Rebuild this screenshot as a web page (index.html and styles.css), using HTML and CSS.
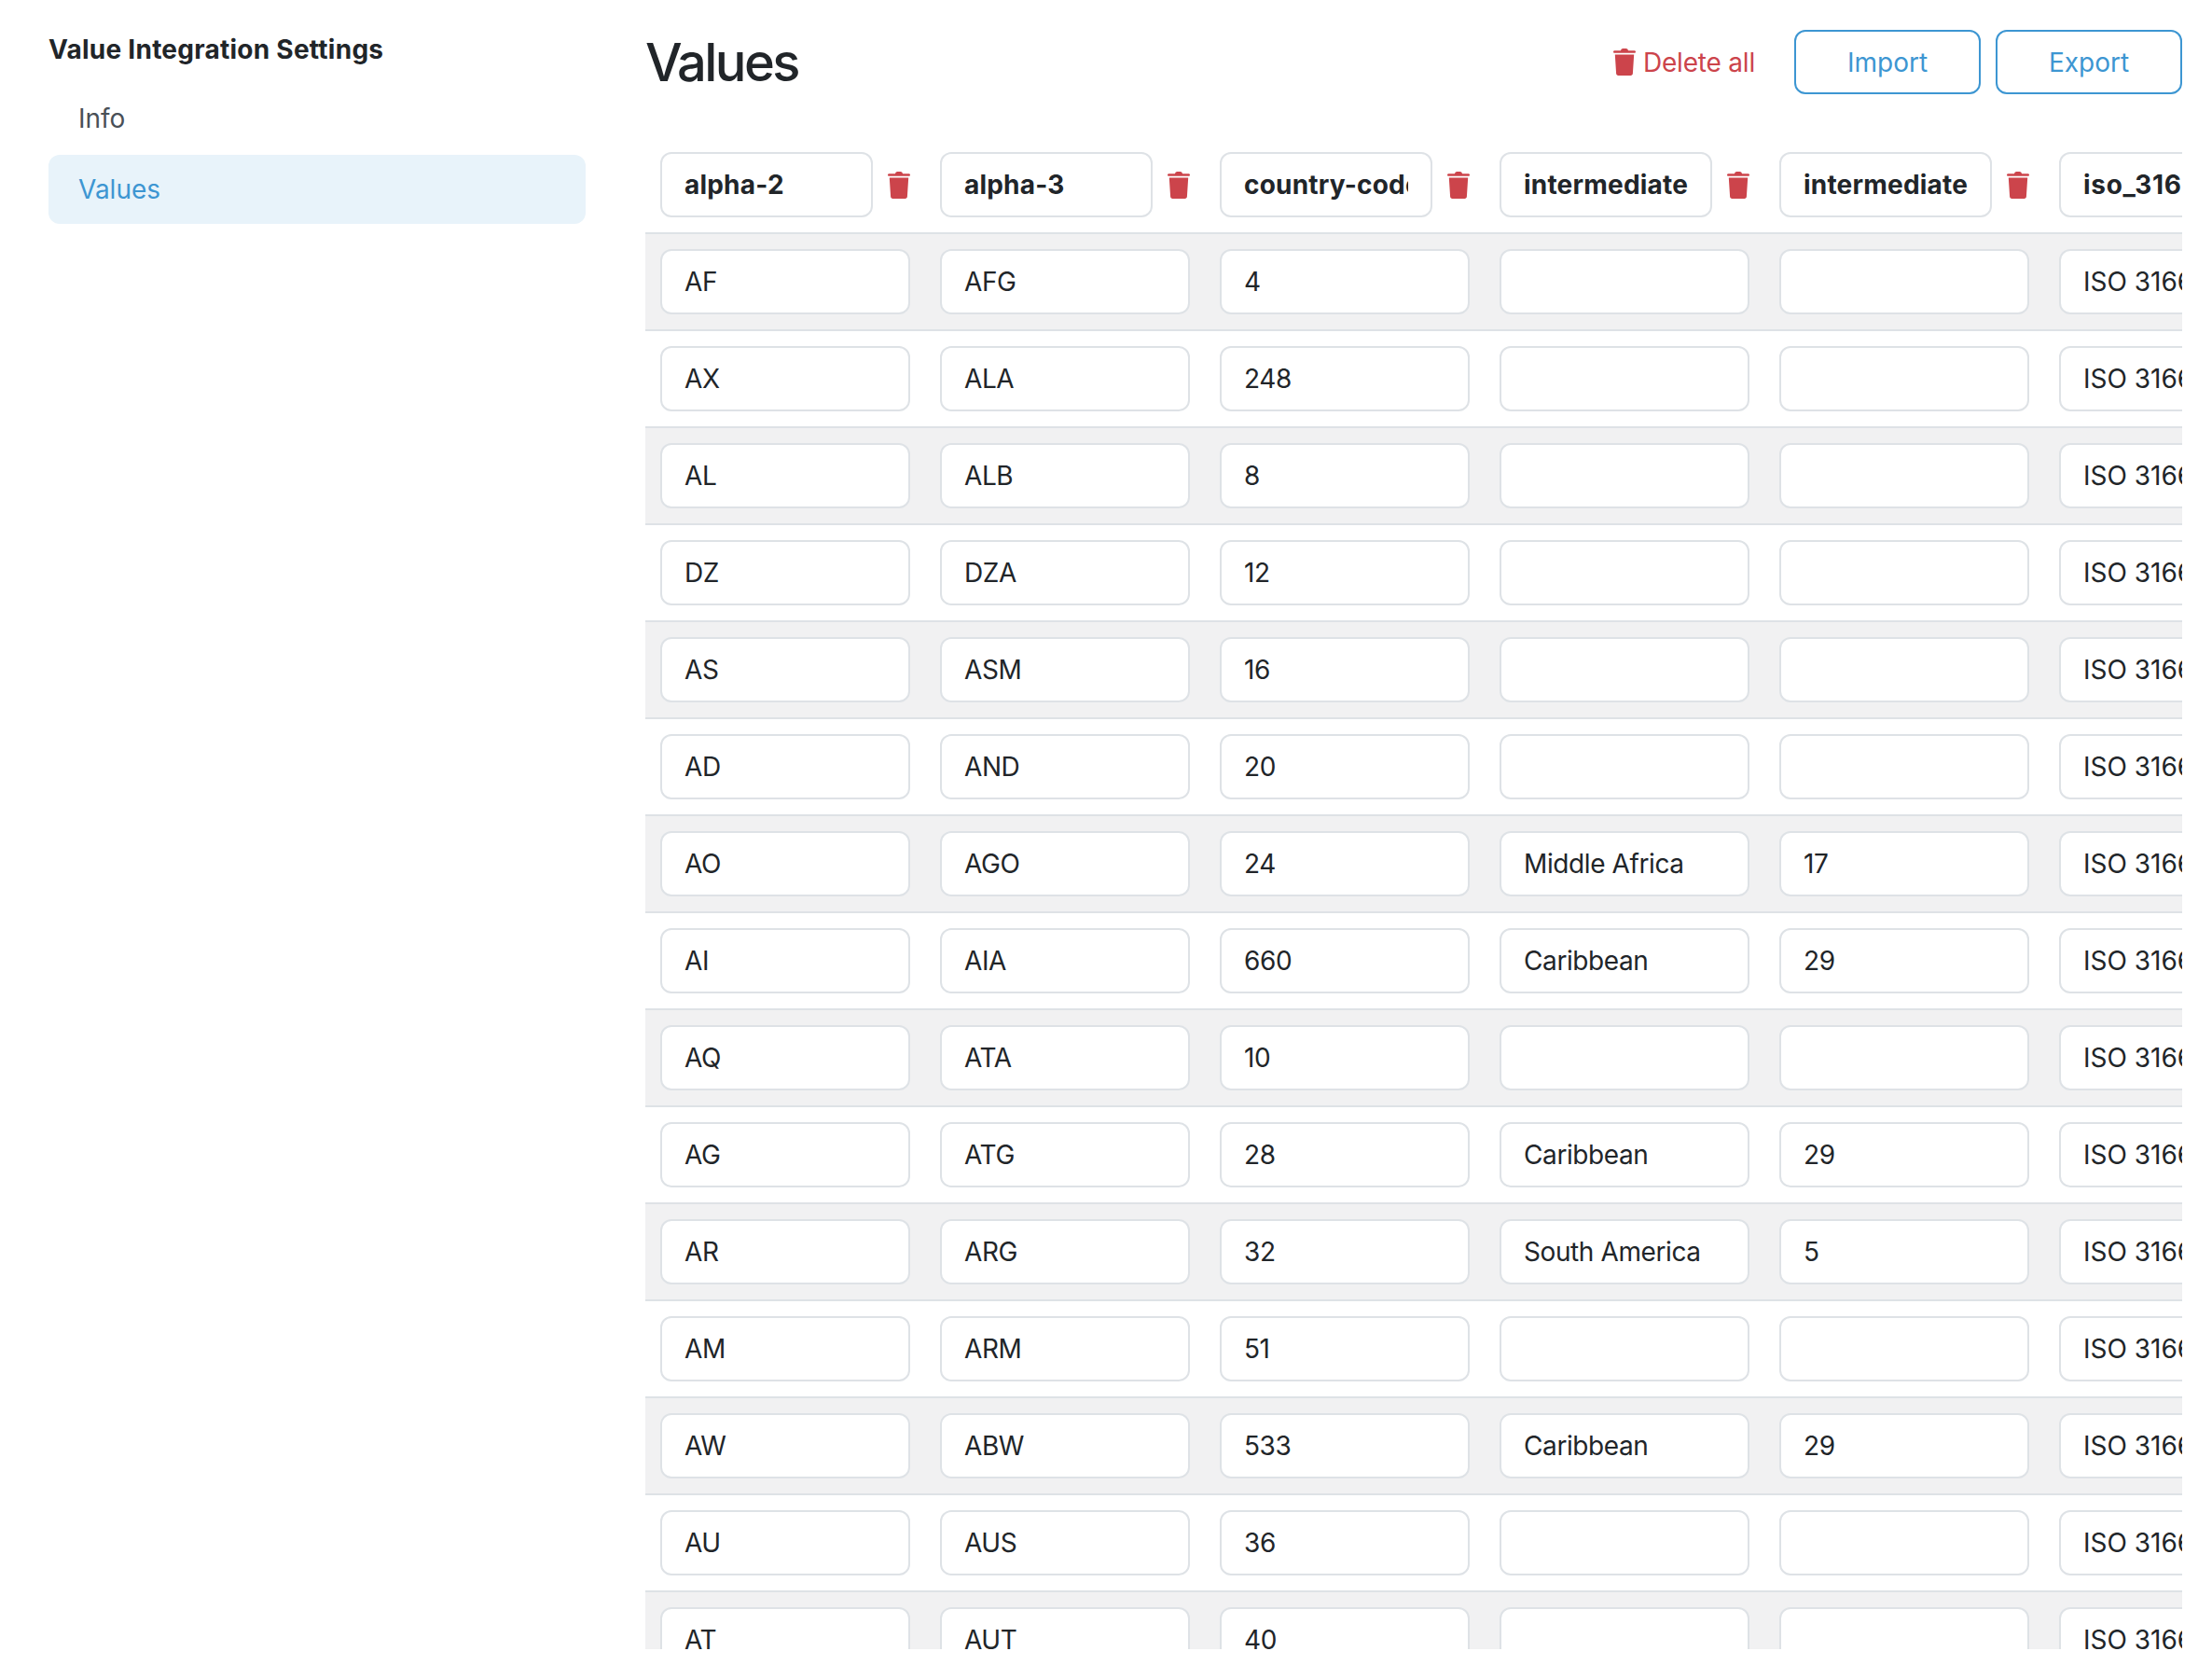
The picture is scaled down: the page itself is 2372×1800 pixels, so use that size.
FILE: index.html
```html
<!DOCTYPE html>
<html lang="en">
<head>
  <meta charset="UTF-8">
  <title>Values</title>
  <link rel="stylesheet" href="styles.css">
</head>
<body>
<svg class="icon-defs" width="0" height="0">
  <symbol id="trash" viewBox="0 0 24 29">
    <path d="M8 2.2C8.3.8 9.2 0 10.4 0h3.2c1.2 0 2.1.8 2.4 2.2h6.6c.8 0 1.4.6 1.4 1.3s-.6 1.3-1.4 1.3H1.400C.6 4.800 0 4.200 0 3.500s.6-1.300 1.400-1.300zM1.800 6.400h20.400l-1.300 20.400c-.1 1.300-1 2.200-2.300 2.200H5.400c-1.300 0-2.200-.9-2.300-2.200z"/>
  </symbol>
</svg>

<div class="page">
  <aside class="sidebar">
    <h2 class="sidebar-title">Value Integration Settings</h2>
    <a class="nav-item">Info</a>
    <a class="nav-item active">Values</a>
  </aside>

  <main class="content">
    <div class="content-header">
      <h1>Values</h1>
      <a class="delete-all"><svg class="trash"><use href="#trash"/></svg>Delete all</a>
      <button class="btn">Import</button>
      <button class="btn">Export</button>
    </div>

    <div class="table-wrap">
      <table>
        <thead>
          <tr>
            <th><div class="head-cell"><input value="alpha-2"><svg class="trash"><use href="#trash"/></svg></div></th>
            <th><div class="head-cell"><input value="alpha-3"><svg class="trash"><use href="#trash"/></svg></div></th>
            <th><div class="head-cell"><input value="country-code"><svg class="trash"><use href="#trash"/></svg></div></th>
            <th><div class="head-cell"><input value="intermediate-region"><svg class="trash"><use href="#trash"/></svg></div></th>
            <th><div class="head-cell"><input value="intermediate-region-code"><svg class="trash"><use href="#trash"/></svg></div></th>
            <th><div class="head-cell"><input value="iso_3166-2"><svg class="trash"><use href="#trash"/></svg></div></th>
          </tr>
        </thead>
        <tbody>
          <tr><td><input value="AF"></td><td><input value="AFG"></td><td><input value="4"></td><td><input value=""></td><td><input value=""></td><td><input value="ISO 3166-2:AF"></td></tr>
          <tr><td><input value="AX"></td><td><input value="ALA"></td><td><input value="248"></td><td><input value=""></td><td><input value=""></td><td><input value="ISO 3166-2:AX"></td></tr>
          <tr><td><input value="AL"></td><td><input value="ALB"></td><td><input value="8"></td><td><input value=""></td><td><input value=""></td><td><input value="ISO 3166-2:AL"></td></tr>
          <tr><td><input value="DZ"></td><td><input value="DZA"></td><td><input value="12"></td><td><input value=""></td><td><input value=""></td><td><input value="ISO 3166-2:DZ"></td></tr>
          <tr><td><input value="AS"></td><td><input value="ASM"></td><td><input value="16"></td><td><input value=""></td><td><input value=""></td><td><input value="ISO 3166-2:AS"></td></tr>
          <tr><td><input value="AD"></td><td><input value="AND"></td><td><input value="20"></td><td><input value=""></td><td><input value=""></td><td><input value="ISO 3166-2:AD"></td></tr>
          <tr><td><input value="AO"></td><td><input value="AGO"></td><td><input value="24"></td><td><input value="Middle Africa"></td><td><input value="17"></td><td><input value="ISO 3166-2:AO"></td></tr>
          <tr><td><input value="AI"></td><td><input value="AIA"></td><td><input value="660"></td><td><input value="Caribbean"></td><td><input value="29"></td><td><input value="ISO 3166-2:AI"></td></tr>
          <tr><td><input value="AQ"></td><td><input value="ATA"></td><td><input value="10"></td><td><input value=""></td><td><input value=""></td><td><input value="ISO 3166-2:AQ"></td></tr>
          <tr><td><input value="AG"></td><td><input value="ATG"></td><td><input value="28"></td><td><input value="Caribbean"></td><td><input value="29"></td><td><input value="ISO 3166-2:AG"></td></tr>
          <tr><td><input value="AR"></td><td><input value="ARG"></td><td><input value="32"></td><td><input value="South America"></td><td><input value="5"></td><td><input value="ISO 3166-2:AR"></td></tr>
          <tr><td><input value="AM"></td><td><input value="ARM"></td><td><input value="51"></td><td><input value=""></td><td><input value=""></td><td><input value="ISO 3166-2:AM"></td></tr>
          <tr><td><input value="AW"></td><td><input value="ABW"></td><td><input value="533"></td><td><input value="Caribbean"></td><td><input value="29"></td><td><input value="ISO 3166-2:AW"></td></tr>
          <tr><td><input value="AU"></td><td><input value="AUS"></td><td><input value="36"></td><td><input value=""></td><td><input value=""></td><td><input value="ISO 3166-2:AU"></td></tr>
          <tr><td><input value="AT"></td><td><input value="AUT"></td><td><input value="40"></td><td><input value=""></td><td><input value=""></td><td><input value="ISO 3166-2:AT"></td></tr>
        </tbody>
      </table>
    </div>
  </main>
</div>
</body>
</html>
```

FILE: styles.css
```css
* {
  box-sizing: border-box;
}
body {
  margin: 0;
  background-color: #fff;
  color: #212529;
  font-family: Inter, "Liberation Sans", sans-serif;
  font-size: 28px;
  line-height: 42px;
}
.icon-defs {
  display: block;
  height: 0;
}
.page {
  display: flex;
  height: 1800px;
  padding: 32px 32px 32px 52px;
  overflow: hidden;
}

/* sidebar */
.sidebar {
  flex: none;
  width: 576px;
  margin-right: 64px;
}
.sidebar-title {
  margin: 0 0 16px;
  font-size: 28px;
  line-height: 42px;
  font-weight: 700;
  letter-spacing: 0.25px;
}
.nav-item {
  display: block;
  padding: 16px 32px;
  margin-bottom: 2px;
  border-radius: 12px;
  color: #495057;
}
.nav-item.active {
  background-color: #e8f3fa;
  color: #3d96d2;
}

/* main area */
.content {
  flex: 1;
  min-width: 0;
  display: flex;
  flex-direction: column;
}
.content-header {
  flex: none;
  display: flex;
  align-items: center;
  height: 69px;
  margin-bottom: 46px;
}
h1 {
  flex: 1;
  margin: 0;
  padding-top: 2px;
  font-size: 56px;
  line-height: 69px;
  font-weight: 500;
  letter-spacing: -2.6px;
}
.delete-all {
  display: flex;
  align-items: center;
  gap: 8px;
  margin-right: 42px;
  color: #cc444b;
  letter-spacing: -0.2px;
}
.btn {
  width: 200px;
  height: 69px;
  margin-left: 16px;
  border: 2px solid #3d96d2;
  border-radius: 12px;
  background-color: #fff;
  color: #3d96d2;
  font: inherit;
}
.delete-all + .btn {
  margin-left: 0;
}
.trash {
  flex: none;
  width: 24px;
  height: 29px;
  fill: #cc444b;
}

/* table */
.table-wrap {
  flex: 1;
  min-height: 0;
  overflow: hidden;
}
table {
  width: 1800px;
  table-layout: fixed;
  border-collapse: separate;
  border-spacing: 0;
}
th, td {
  width: 300px;
  padding: 16px;
  border-bottom: 2px solid #dee2e6;
}
tbody tr:nth-child(odd) {
  background-color: #f1f1f2;
}
.head-cell {
  display: flex;
  align-items: center;
  gap: 16px;
}
input {
  display: block;
  width: 100%;
  min-width: 0;
  height: 70px;
  padding: 12px 24px;
  border: 2px solid #dee2e6;
  border-radius: 12px;
  background-color: #fff;
  color: #212529;
  font: inherit;
  letter-spacing: -0.4px;
  outline: none;
}
td:last-child input {
  letter-spacing: 0;
}
th input {
  font-weight: 700;
  letter-spacing: 0.2px;
}
th:last-child input {
  letter-spacing: 0.7px;
}
```
